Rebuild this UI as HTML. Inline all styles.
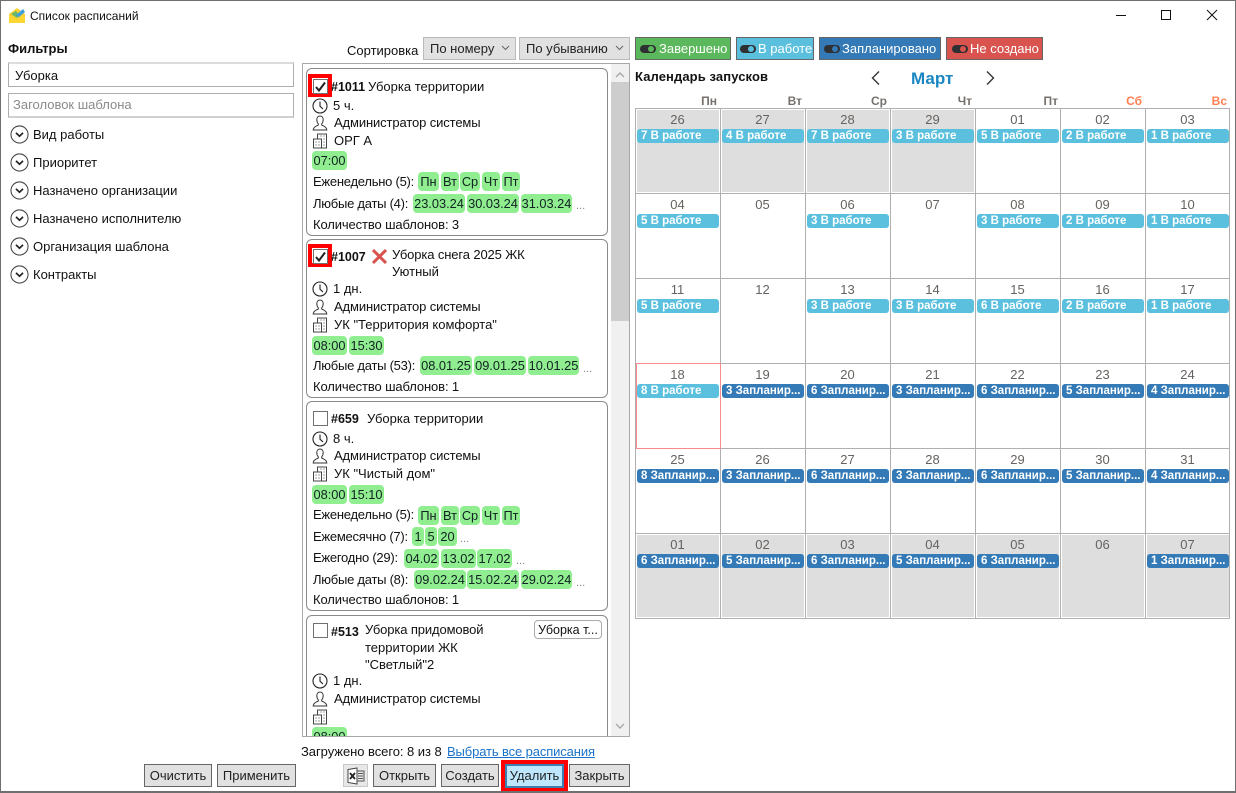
<!DOCTYPE html>
<html lang="ru"><head><meta charset="utf-8"><title>Список расписаний</title>
<style>
html,body{margin:0;padding:0;background:#fff}
#w{position:relative;width:1236px;height:793px;overflow:hidden;background:#fff;font:13px/16px "Liberation Sans",sans-serif;color:#111}
#w *{box-sizing:border-box}
.t,.b,.g,.c,.p,.n,.l,.h,.k,.i,.x{position:absolute;white-space:nowrap}
.a{letter-spacing:-.25px}
.d{letter-spacing:-.12px}
.b{background:#e1e1e1;border:1px solid #666;height:23px;top:764px;text-align:center;line-height:21px;color:#222}
.g{background:#90ee90;border-radius:4px;height:19px;line-height:19px;text-align:center;color:#122;font-size:12.8px}
.c{border:1px solid #8a8a8a;border-radius:6px;left:306px;width:302px;background:#fff}
.k{width:15px;height:15px;border:1px solid #707070;background:#fff;left:313px}
.r{position:absolute;border:4px solid #f00;width:24px;height:23px;left:308px}
.e{position:absolute;color:#888;font-size:11px;line-height:12px}
.l{top:37px;height:23px;border:1px solid #666;color:#fff;line-height:21px;font-size:13px}
.l u{position:absolute;top:7px;width:16px;height:8px;border-radius:4px;background:#2e3033}
.l s{position:absolute;top:8px;width:6px;height:6px;border-radius:50%}
.l span{position:absolute;top:0}
.h{top:93px;font-weight:bold;color:#77716e;font-size:12px;width:40px;text-align:right}
.cal{position:absolute;left:635px;top:108px;width:595px;height:511px}
.v,.o{position:absolute;background:#b0b0b0}
.v{width:1px;top:0;height:511px}
.o{height:1px;left:0;width:595px}
.s{position:absolute;background:#dedede;width:82px;height:82px}
.n{width:85px;text-align:center;color:#66625f;font-size:13px;line-height:16px;margin-top:1px}
.p{width:82px;height:14px;border-radius:3px;color:#fff;font-weight:bold;font-size:11.5px;line-height:15px;padding-left:4px;overflow:hidden;background:#5bc0de}
.q{background:#337ab7}
.f{position:absolute;left:8px;width:286px;height:25px;background:#fff;border:1px solid #adadad;border-top:2px solid #dcdcdc;line-height:24px;padding-left:6px}
</style></head><body><div id="w">
<svg width="0" height="0" style="position:absolute"><defs>
<symbol id="clock" viewBox="0 0 16 16"><circle cx="8" cy="8" r="7" fill="none" stroke="#222" stroke-width="1.1"/><path d="M8 3.5V8.2L11 11" fill="none" stroke="#222" stroke-width="1.1"/></symbol>
<symbol id="user" viewBox="0 0 16 16"><path d="M8 1C5.8 1 4.8 2.8 4.8 4.8 4.8 6.6 5.5 8 6.3 8.8V10C5 11 1.5 11.3 1.2 15H14.8C14.5 11.3 11 11 9.7 10V8.8C10.5 8 11.2 6.6 11.2 4.8 11.2 2.8 10.2 1 8 1Z" fill="none" stroke="#333" stroke-width="1"/></symbol>
<symbol id="bld" viewBox="0 0 16 16"><path d="M5.5 6V1H14.5V15H1.5V6H9.5V15M3.5 9H4.5M6.5 9H7.5M3.5 12H4.5M6.500 12H7.500M8.500 3H9.500M11.500 3H12.500M11.500 6H12.500M11.500 9H12.500M11.500 12H12.500" fill="none" stroke="#444" stroke-width="1"/></symbol>
<symbol id="chev" viewBox="0 0 20 20"><circle cx="10" cy="10" r="9" fill="none" stroke="#444" stroke-width="1.1"/><path d="M6.300 8.300L10 11.800 13.700 8.300" fill="none" stroke="#222" stroke-width="1.800"/></symbol>
<symbol id="chk" viewBox="0 0 15 15"><path d="M3 8L6 11.500 12 3.500" fill="none" stroke="#222" stroke-width="2"/></symbol>
</defs></svg>

<div style="position:absolute;inset:0;border:1px solid #6f6f6f;border-bottom-width:2px;z-index:9;pointer-events:none"></div>

<svg style="position:absolute;left:9px;top:7px" width="17" height="17" viewBox="0 0 17 17"><path d="M0 7L8 1 16 7V16H0Z" fill="#ffcf33"/><path d="M2 7L7 4 11 9 8 11Z" fill="#65b96b"/><path d="M7 8L14 2 16 5 10 10Z" fill="#3fa0dc"/><path d="M0 8L8 13 16 8V16H0Z" fill="#fdd835"/></svg>
<div class="t" style="left:30px;top:8px;font-size:12px">Список расписаний</div>
<svg style="position:absolute;left:1110px;top:8px" width="115" height="16" viewBox="0 0 115 16"><path d="M6 7.500H16" stroke="#111" fill="none"/><path d="M51.500 2.500H60.500V11.500H51.500Z" stroke="#111" fill="none"/><path d="M97 2L107 12M107 2L97 12" stroke="#111" fill="none"/></svg>

<div class="t" style="left:8px;top:41px;font-weight:bold">Фильтры</div>
<div class="f" style="top:62px">Уборка</div>
<div class="f" style="top:93px;height:25px;color:#8a8a8a;padding-left:4px;border:1px solid #adadad;border-bottom:2px solid #d0d0d0;line-height:22px">Заголовок шаблона</div>
<svg class="i" style="left:10px;top:125px" width="19" height="19"><use href="#chev"/></svg><div class="t" style="left:33px;top:127px">Вид работы</div>
<svg class="i" style="left:10px;top:153px" width="19" height="19"><use href="#chev"/></svg><div class="t" style="left:33px;top:155px">Приоритет</div>
<svg class="i" style="left:10px;top:181px" width="19" height="19"><use href="#chev"/></svg><div class="t" style="left:33px;top:183px">Назначено организации</div>
<svg class="i" style="left:10px;top:209px" width="19" height="19"><use href="#chev"/></svg><div class="t" style="left:33px;top:211px">Назначено исполнителю</div>
<svg class="i" style="left:10px;top:237px" width="19" height="19"><use href="#chev"/></svg><div class="t" style="left:33px;top:239px">Организация шаблона</div>
<svg class="i" style="left:10px;top:265px" width="19" height="19"><use href="#chev"/></svg><div class="t" style="left:33px;top:267px">Контракты</div>

<div class="t" style="left:347px;top:43px">Сортировка</div>
<div class="b" style="left:423px;top:37px;width:93px;border-color:#bbb;text-align:left;padding-left:6px">По номеру<svg style="position:absolute;right:5px;top:7px" width="9" height="6"><path d="M1 1L4.500 4.500 8 1" fill="none" stroke="#666"/></svg></div>
<div class="b" style="left:519px;top:37px;width:111px;border-color:#bbb;text-align:left;padding-left:6px">По убыванию<svg style="position:absolute;right:5px;top:7px" width="9" height="6"><path d="M1 1L4.500 4.500 8 1" fill="none" stroke="#666"/></svg></div>

<div style="position:absolute;left:302px;top:63px;width:328px;height:674px;border:1px solid #a8a8a8;background:#fff"></div>
<div style="position:absolute;left:611px;top:64px;width:18px;height:672px;background:#f0f0f0"></div>
<div style="position:absolute;left:611px;top:82px;width:18px;height:239px;background:#cdcdcd"></div>
<svg style="position:absolute;left:615px;top:72px" width="10" height="6"><path d="M1 5L5 1 9 5" fill="none" stroke="#a8a8a8" stroke-width="1.400"/></svg>
<svg style="position:absolute;left:615px;top:723px" width="10" height="6"><path d="M1 1L5 5 9 1" fill="none" stroke="#a8a8a8" stroke-width="1.400"/></svg>

<!-- card 1 -->
<div class="c" style="top:68px;height:168px"></div>
<div class="r" style="top:74px"></div><div class="k" style="top:79px"></div><svg class="i" style="left:313px;top:79px" width="15" height="15"><use href="#chk"/></svg>
<div class="t" style="left:331px;top:79px;font-weight:bold;font-size:12.500px">#1011</div><div class="t" style="left:368px;top:79px">Уборка территории</div>
<svg class="i" style="left:312px;top:98px" width="16" height="16"><use href="#clock"/></svg><div class="t" style="left:333px;top:98px">5 ч.</div>
<svg class="i" style="left:312px;top:115px" width="16" height="16"><use href="#user"/></svg><div class="t d" style="left:334px;top:115px">Администратор системы</div>
<svg class="i" style="left:312px;top:133px" width="16" height="16"><use href="#bld"/></svg><div class="t" style="left:334px;top:133px">ОРГ А</div>
<div class="g" style="left:312px;top:151px;width:35px">07:00</div>
<div class="t a" style="left:313px;top:174px">Еженедельно (5):</div>
<div class="g" style="left:418px;top:172px;width:21px">Пн</div><div class="g" style="left:441px;top:172px;width:18px">Вт</div><div class="g" style="left:460px;top:172px;width:20px">Ср</div><div class="g" style="left:482px;top:172px;width:18px">Чт</div><div class="g" style="left:502px;top:172px;width:18px">Пт</div>
<div class="t a" style="left:313px;top:196px">Любые даты (4):</div>
<div class="g" style="left:413px;top:194px;width:52px">23.03.24</div><div class="g" style="left:467px;top:194px;width:52px">30.03.24</div><div class="g" style="left:521px;top:194px;width:51px">31.03.24</div><div class="e" style="left:576px;top:200px">...</div>
<div class="t d" style="left:313px;top:217px">Количество шаблонов: 3</div>

<!-- card 2 -->
<div class="c" style="top:239px;height:159px"></div>
<div class="r" style="top:244px"></div><div class="k" style="top:249px"></div><svg class="i" style="left:313px;top:249px" width="15" height="15"><use href="#chk"/></svg>
<div class="t" style="left:331px;top:249px;font-weight:bold;font-size:12.500px">#1007</div>
<svg class="i" style="left:372px;top:249px" width="15" height="15"><path d="M1 1L14 14M14 1L1 14" stroke="#d9534f" stroke-width="3"/></svg>
<div class="t d" style="left:392px;top:247px">Уборка снега 2025 ЖК</div><div class="t" style="left:392px;top:264px">Уютный</div>
<svg class="i" style="left:312px;top:281px" width="16" height="16"><use href="#clock"/></svg><div class="t" style="left:333px;top:281px">1 дн.</div>
<svg class="i" style="left:312px;top:299px" width="16" height="16"><use href="#user"/></svg><div class="t d" style="left:334px;top:299px">Администратор системы</div>
<svg class="i" style="left:312px;top:317px" width="16" height="16"><use href="#bld"/></svg><div class="t" style="left:334px;top:317px">УК "Территория комфорта"</div>
<div class="g" style="left:312px;top:336px;width:35px">08:00</div><div class="g" style="left:349px;top:336px;width:35px">15:30</div>
<div class="t a" style="left:313px;top:358px">Любые даты (53):</div>
<div class="g" style="left:420px;top:356px;width:52px">08.01.25</div><div class="g" style="left:474px;top:356px;width:52px">09.01.25</div><div class="g" style="left:528px;top:356px;width:51px">10.01.25</div><div class="e" style="left:583px;top:363px">...</div>
<div class="t d" style="left:313px;top:379px">Количество шаблонов: 1</div>

<!-- card 3 -->
<div class="c" style="top:401px;height:210px"></div>
<div class="k" style="top:411px"></div>
<div class="t" style="left:331px;top:411px;font-weight:bold;font-size:12.500px">#659</div><div class="t" style="left:367px;top:411px">Уборка территории</div>
<svg class="i" style="left:312px;top:431px" width="16" height="16"><use href="#clock"/></svg><div class="t" style="left:333px;top:431px">8 ч.</div>
<svg class="i" style="left:312px;top:448px" width="16" height="16"><use href="#user"/></svg><div class="t d" style="left:334px;top:448px">Администратор системы</div>
<svg class="i" style="left:312px;top:466px" width="16" height="16"><use href="#bld"/></svg><div class="t" style="left:334px;top:466px">УК "Чистый дом"</div>
<div class="g" style="left:312px;top:485px;width:35px">08:00</div><div class="g" style="left:349px;top:485px;width:35px">15:10</div>
<div class="t a" style="left:313px;top:507px">Еженедельно (5):</div>
<div class="g" style="left:418px;top:506px;width:21px">Пн</div><div class="g" style="left:441px;top:506px;width:18px">Вт</div><div class="g" style="left:460px;top:506px;width:20px">Ср</div><div class="g" style="left:482px;top:506px;width:18px">Чт</div><div class="g" style="left:502px;top:506px;width:18px">Пт</div>
<div class="t a" style="left:313px;top:529px">Ежемесячно (7):</div>
<div class="g" style="left:412px;top:527px;width:12px">1</div><div class="g" style="left:425px;top:527px;width:12px">5</div><div class="g" style="left:438px;top:527px;width:19px">20</div><div class="e" style="left:460px;top:533px">...</div>
<div class="t a" style="left:313px;top:550px">Ежегодно (29):</div>
<div class="g" style="left:404px;top:549px;width:35px">04.02</div><div class="g" style="left:441px;top:549px;width:35px">13.02</div><div class="g" style="left:477px;top:549px;width:35px">17.02</div><div class="e" style="left:516px;top:555px">...</div>
<div class="t a" style="left:313px;top:572px">Любые даты (8):</div>
<div class="g" style="left:414px;top:570px;width:52px">09.02.24</div><div class="g" style="left:467px;top:570px;width:52px">15.02.24</div><div class="g" style="left:521px;top:570px;width:51px">29.02.24</div><div class="e" style="left:576px;top:577px">...</div>
<div class="t d" style="left:313px;top:592px">Количество шаблонов: 1</div>

<!-- card 4 -->
<div style="position:absolute;left:306px;top:615px;width:302px;height:121px;overflow:hidden"><div style="position:absolute;left:0;top:0;width:302px;height:160px;border:1px solid #8a8a8a;border-radius:6px;background:#fff"></div>
<div class="g" style="left:6px;top:112px;width:35px">08:00</div></div>
<div class="k" style="top:623px"></div>
<div class="t" style="left:331px;top:624px;font-weight:bold;font-size:12.500px">#513</div>
<div class="t d" style="left:365px;top:622px">Уборка придомовой</div><div class="t" style="left:365px;top:640px">территории ЖК</div><div class="t" style="left:365px;top:657px">"Светлый"2</div>
<div class="t" style="left:534px;top:620px;width:68px;height:19px;border:1px solid #aaa;border-radius:4px;text-align:center;line-height:18px;font-size:12.500px">Уборка т...</div>
<svg class="i" style="left:312px;top:673px" width="16" height="16"><use href="#clock"/></svg><div class="t" style="left:333px;top:673px">1 дн.</div>
<svg class="i" style="left:312px;top:691px" width="16" height="16"><use href="#user"/></svg><div class="t d" style="left:334px;top:691px">Администратор системы</div>
<svg class="i" style="left:312px;top:709px" width="16" height="16"><use href="#bld"/></svg>

<div class="t" style="left:301px;top:744px;letter-spacing:-.05px">Загружено всего: 8 из 8</div>
<div class="t d" style="left:447px;top:744px;color:#1a73c9;text-decoration:underline">Выбрать все расписания</div>

<div class="b" style="left:144px;width:68px">Очистить</div>
<div class="b" style="left:217px;width:79px">Применить</div>
<div class="b" style="left:343px;width:25px;border:1px solid #c8c8c8;background:#e8e8e8"><svg style="position:absolute;left:3px;top:2px" width="18" height="18" viewBox="0 0 18 18"><path d="M1 2.500L10 1V17L1 15.500Z" fill="#fff" stroke="#444"/><path d="M10 4H17V14H10M11 6.500H16M11 9H16M11 11.500H16" fill="none" stroke="#555"/><path d="M3 6L8 12M8 6L3 12" stroke="#222" stroke-width="1.800" fill="none"/></svg></div>
<div class="b" style="left:373px;width:63px">Открыть</div>
<div class="b" style="left:441px;width:58px">Создать</div>
<div style="position:absolute;left:501px;top:760px;width:67px;height:32px;border:4px solid #f00;background:#bee6fd"></div>
<div class="b" style="left:505px;width:59px;height:24px;background:#bee6fd;border:2px solid #3c7fb1;line-height:20px">Удалить</div>
<div class="b" style="left:569px;width:61px">Закрыть</div>

<!-- legend -->
<div class="l" style="left:635px;width:96px;background:#5cb85c"><u style="left:4px"></u><s style="left:12px;background:#5cb85c"></s><span style="left:23px">Завершено</span></div>
<div class="l" style="left:736px;width:78px;background:#5bc0de"><u style="left:3px"></u><s style="left:11px;background:#5bc0de"></s><span style="left:21px">В работе</span></div>
<div class="l" style="left:819px;width:122px;background:#337ab7"><u style="left:4px"></u><s style="left:12px;background:#337ab7"></s><span style="left:22px">Запланировано</span></div>
<div class="l" style="left:946px;width:97px;background:#d9534f"><u style="left:5px"></u><s style="left:13px;background:#d9534f"></s><span style="left:23px">Не создано</span></div>

<div class="t" style="left:635px;top:69px;font-weight:bold;letter-spacing:.1px">Календарь запусков</div>
<svg class="i" style="left:870px;top:70px" width="12" height="16"><path d="M9 1.500L2.500 8 9 14.500" fill="none" stroke="#333" stroke-width="1.400"/></svg>
<svg class="i" style="left:984px;top:70px" width="12" height="16"><path d="M3 1.500L9.500 8 3 14.500" fill="none" stroke="#333" stroke-width="1.400"/></svg>
<div class="t" style="left:911px;top:69px;font-size:17px;line-height:20px;font-weight:bold;color:#1a87c2">Март</div>

<div class="h" style="left:677px">Пн</div><div class="h" style="left:762px">Вт</div><div class="h" style="left:847px">Ср</div><div class="h" style="left:932px">Чт</div><div class="h" style="left:1018px">Пт</div><div class="h" style="left:1102px;color:#ff7f50">Сб</div><div class="h" style="left:1187px;color:#ff7f50">Вс</div>

<div class="cal">
<div class="s" style="left:2px;top:2px"></div><div class="s" style="left:87px;top:2px"></div><div class="s" style="left:172px;top:2px"></div><div class="s" style="left:257px;top:2px"></div>
<div class="s" style="left:2px;top:427px"></div><div class="s" style="left:87px;top:427px"></div><div class="s" style="left:172px;top:427px"></div><div class="s" style="left:257px;top:427px"></div><div class="s" style="left:342px;top:427px"></div><div class="s" style="left:427px;top:427px"></div><div class="s" style="left:512px;top:427px"></div>
<div class="v" style="left:0"></div><div class="v" style="left:85px"></div><div class="v" style="left:170px"></div><div class="v" style="left:255px"></div><div class="v" style="left:340px"></div><div class="v" style="left:425px"></div><div class="v" style="left:510px"></div><div class="v" style="left:594px"></div>
<div class="o" style="top:0"></div><div class="o" style="top:85px"></div><div class="o" style="top:170px"></div><div class="o" style="top:255px"></div><div class="o" style="top:340px"></div><div class="o" style="top:425px"></div><div class="o" style="top:510px"></div>
<div style="position:absolute;left:1px;top:255px;width:85px;height:86px;border:1px solid #f78a8a;background:#fff"></div>

<div class="n" style="left:0;top:3px">26</div><div class="p" style="left:2px;top:21px">7 В работе</div>
<div class="n" style="left:85px;top:3px">27</div><div class="p" style="left:87px;top:21px">4 В работе</div>
<div class="n" style="left:170px;top:3px">28</div><div class="p" style="left:172px;top:21px">7 В работе</div>
<div class="n" style="left:255px;top:3px">29</div><div class="p" style="left:257px;top:21px">3 В работе</div>
<div class="n" style="left:340px;top:3px">01</div><div class="p" style="left:342px;top:21px">5 В работе</div>
<div class="n" style="left:425px;top:3px">02</div><div class="p" style="left:427px;top:21px">2 В работе</div>
<div class="n" style="left:510px;top:3px">03</div><div class="p" style="left:512px;top:21px">1 В работе</div>

<div class="n" style="left:0;top:88px">04</div><div class="p" style="left:2px;top:106px">5 В работе</div>
<div class="n" style="left:85px;top:88px">05</div>
<div class="n" style="left:170px;top:88px">06</div><div class="p" style="left:172px;top:106px">3 В работе</div>
<div class="n" style="left:255px;top:88px">07</div>
<div class="n" style="left:340px;top:88px">08</div><div class="p" style="left:342px;top:106px">3 В работе</div>
<div class="n" style="left:425px;top:88px">09</div><div class="p" style="left:427px;top:106px">2 В работе</div>
<div class="n" style="left:510px;top:88px">10</div><div class="p" style="left:512px;top:106px">1 В работе</div>

<div class="n" style="left:0;top:173px">11</div><div class="p" style="left:2px;top:191px">5 В работе</div>
<div class="n" style="left:85px;top:173px">12</div>
<div class="n" style="left:170px;top:173px">13</div><div class="p" style="left:172px;top:191px">3 В работе</div>
<div class="n" style="left:255px;top:173px">14</div><div class="p" style="left:257px;top:191px">3 В работе</div>
<div class="n" style="left:340px;top:173px">15</div><div class="p" style="left:342px;top:191px">6 В работе</div>
<div class="n" style="left:425px;top:173px">16</div><div class="p" style="left:427px;top:191px">2 В работе</div>
<div class="n" style="left:510px;top:173px">17</div><div class="p" style="left:512px;top:191px">1 В работе</div>

<div class="n" style="left:0;top:258px">18</div><div class="p" style="left:2px;top:276px">8 В работе</div>
<div class="n" style="left:85px;top:258px">19</div><div class="p q" style="left:87px;top:276px">3 Запланир...</div>
<div class="n" style="left:170px;top:258px">20</div><div class="p q" style="left:172px;top:276px">6 Запланир...</div>
<div class="n" style="left:255px;top:258px">21</div><div class="p q" style="left:257px;top:276px">3 Запланир...</div>
<div class="n" style="left:340px;top:258px">22</div><div class="p q" style="left:342px;top:276px">6 Запланир...</div>
<div class="n" style="left:425px;top:258px">23</div><div class="p q" style="left:427px;top:276px">5 Запланир...</div>
<div class="n" style="left:510px;top:258px">24</div><div class="p q" style="left:512px;top:276px">4 Запланир...</div>

<div class="n" style="left:0;top:343px">25</div><div class="p q" style="left:2px;top:361px">8 Запланир...</div>
<div class="n" style="left:85px;top:343px">26</div><div class="p q" style="left:87px;top:361px">3 Запланир...</div>
<div class="n" style="left:170px;top:343px">27</div><div class="p q" style="left:172px;top:361px">6 Запланир...</div>
<div class="n" style="left:255px;top:343px">28</div><div class="p q" style="left:257px;top:361px">3 Запланир...</div>
<div class="n" style="left:340px;top:343px">29</div><div class="p q" style="left:342px;top:361px">6 Запланир...</div>
<div class="n" style="left:425px;top:343px">30</div><div class="p q" style="left:427px;top:361px">5 Запланир...</div>
<div class="n" style="left:510px;top:343px">31</div><div class="p q" style="left:512px;top:361px">4 Запланир...</div>

<div class="n" style="left:0;top:428px">01</div><div class="p q" style="left:2px;top:446px">6 Запланир...</div>
<div class="n" style="left:85px;top:428px">02</div><div class="p q" style="left:87px;top:446px">5 Запланир...</div>
<div class="n" style="left:170px;top:428px">03</div><div class="p q" style="left:172px;top:446px">6 Запланир...</div>
<div class="n" style="left:255px;top:428px">04</div><div class="p q" style="left:257px;top:446px">5 Запланир...</div>
<div class="n" style="left:340px;top:428px">05</div><div class="p q" style="left:342px;top:446px">6 Запланир...</div>
<div class="n" style="left:425px;top:428px">06</div>
<div class="n" style="left:510px;top:428px">07</div><div class="p q" style="left:512px;top:446px">1 Запланир...</div>
</div>
</div></body></html>
